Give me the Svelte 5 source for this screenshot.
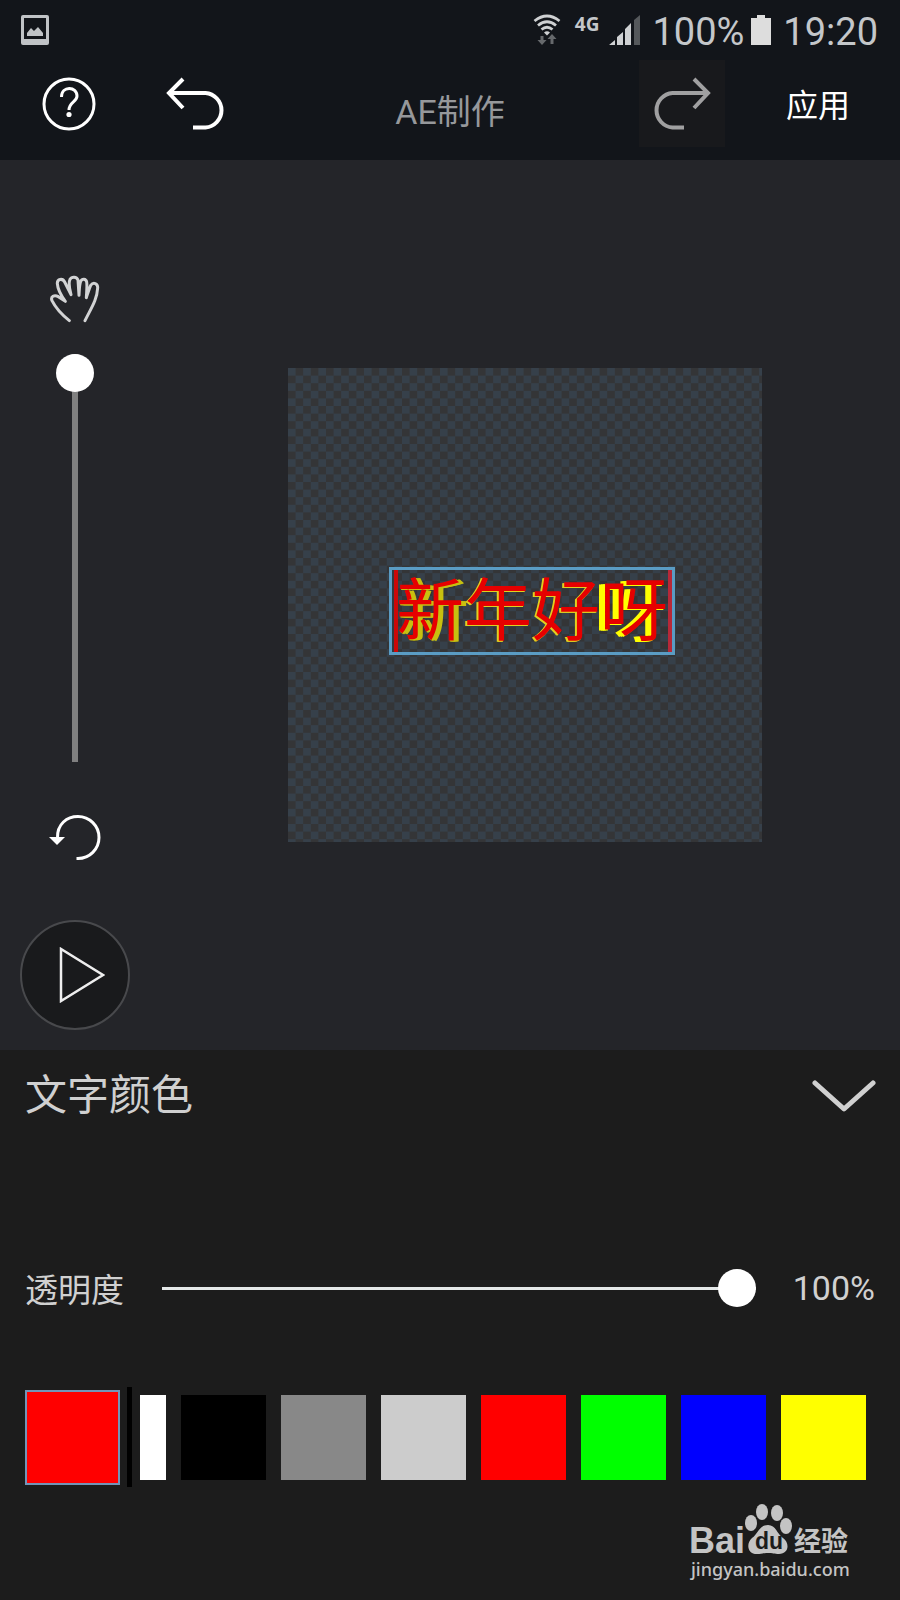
<script lang="ts">
    let zoom = 100;
    let opacity = 100;
    let current = "#ff0000";

    const colors = [
        { name: "白色", value: "#ffffff" },
        { name: "黑色", value: "#000000" },
        { name: "灰色", value: "#888888" },
        { name: "浅灰", value: "#cccccc" },
        { name: "红色", value: "#ff0000" },
        { name: "绿色", value: "#00ff00" },
        { name: "蓝色", value: "#0000ff" },
        { name: "黄色", value: "#ffff00" },
    ];
</script>

<div class="app">
    <div class="status">
        <svg class="status-photo" width="28" height="30" viewBox="0 0 28 30">
            <path fill="#c0c3c6" fill-rule="evenodd" d="M2 0H26Q28 0 28 2V28Q28 30 26 30H2Q0 30 0 28V2Q0 0 2 0ZM3 3V24H25V3Z" />
            <path fill="#c0c3c6" d="M6 21V18L10 13L13 16L17 12L22 18V21Z" />
        </svg>
        <svg class="status-wifi" width="28" height="32" viewBox="0 0 28 32">
            <g fill="none" stroke="#cfd1d3" stroke-width="2.8">
                <path d="M1.500 7Q14-3 26.500 7" />
                <path d="M5 11.500Q14 4 23 11.500" />
                <path d="M8.500 15.500Q14 11 19.500 15.500" />
            </g>
            <path fill="#cfd1d3" d="M11 18.500Q14 16 17 18.500L14 21.500Z" />
            <path fill="#66696c" d="M7.500 22H10.500V26H13.500L9 31L4.500 26H7.500ZM17.500 30H20.500V25H23.500L19 20L14.500 25H17.500Z" />
        </svg>
        <span class="network">4G</span>
        <svg class="status-signal" width="31" height="30" viewBox="0 0 31 30">
            <path fill="#cfd1d3" d="M0 30L6 25V30ZM8 22L14 17V30H8ZM16 14L22 8V30H16Z" />
            <path fill="#55585b" d="M25 5L31 0V30H25Z" />
        </svg>
        <span class="status-text">100%</span>
        <svg class="status-battery" width="20" height="30" viewBox="0 0 20 30">
            <path fill="#dddddd" d="M6 0H14V3H20V30H0V3H6Z" />
        </svg>
        <span class="status-text">19:20</span>
    </div>

    <header class="toolbar">
        <div class="toolbar-side">
            <button class="icon-button" aria-label="帮助">
                <svg width="54" height="54" viewBox="0 0 54 54" fill="none" stroke="#ffffff" stroke-width="3">
                    <circle cx="27" cy="27" r="25" />
                    <path d="M19.500 20C19.500 8.500 35 9 35 19C35 25 27 25 27 33" />
                    <circle cx="27" cy="37.500" r="2.600" fill="#ffffff" stroke="none" />
                </svg>
            </button>
            <button class="icon-button" aria-label="撤销">
                <svg width="59" height="54" viewBox="0 0 59 54" fill="none" stroke="#ffffff" stroke-width="4">
                    <path d="M17 2L3 16L17 31M3 16H39.500A17.300 17.300 0 0 1 39.500 50.500H27" />
                </svg>
            </button>
        </div>
        <h1>AE制作</h1>
        <div class="toolbar-side toolbar-right">
            <button class="icon-button redo" aria-label="重做">
                <svg width="58" height="54" viewBox="0 0 58 54" fill="none" stroke="#a0a0a1" stroke-width="4">
                    <path d="M41 2L55 16L41 31M55 16H19.500A17.300 17.300 0 0 0 19.500 50.500H31" />
                </svg>
            </button>
            <button class="apply">应用</button>
        </div>
    </header>

    <main class="stage">
        <div class="tools">
            <button class="icon-button" aria-label="移动">
                <svg width="52" height="48" viewBox="149 75 156 144" fill="none" stroke="#d2d3d4" stroke-width="9" stroke-linecap="round" stroke-linejoin="round">
                    <path d="M210 212C190 196 168 172 158 152C153 140 165 133 177 140L198 154C184 135 175 116 174 101C173 86 190 84 196 96L215 134C210 115 207 98 212 88C217 79 232 79 236 90L239 136C240 120 240 105 244 94C248 85 260 85 262 96C264 108 262 125 261 143C266 128 270 115 274 106C282 95 296 100 295 114C293 150 275 175 257 212" />
                </svg>
            </button>
            <input class="range zoom" type="range" aria-label="缩放" bind:value={zoom} />
            <button class="icon-button" aria-label="重置">
                <svg width="52" height="48" viewBox="0 0 52 48">
                    <path fill="none" stroke="#ffffff" stroke-width="3" d="M8.500 25C8 11 18 3.500 29 3.500A21 21 0 0 1 29 45.500H27.500" />
                    <path fill="#ffffff" d="M0 24H16L8 32Z" />
                </svg>
            </button>
            <button class="play" aria-label="播放">
                <svg width="46" height="56" viewBox="0 0 46 56" fill="none" stroke="#eeeeee" stroke-width="2.5">
                    <path d="M2 2V54L44 28Z" />
                </svg>
            </button>
        </div>

        <div class="canvas-area">
            <div class="canvas">
                <svg class="checker" viewBox="0 0 474 474" aria-hidden="true">
                    <defs>
                        <pattern id="checker" width="15.200" height="15.200" patternUnits="userSpaceOnUse">
                            <rect width="15.200" height="15.200" fill="#36404a" />
                            <path fill="#343537" d="M7.600 0H15.200V7.600H7.600ZM0 7.600H7.600V15.200H0Z" />
                        </pattern>
                    </defs>
                    <rect width="474" height="474" fill="url(#checker)" />
                </svg>
                <div class="text-layer">
                    <span class="far-right">新</span><span class="near-left">年</span><span class="near-left">好</span><span class="far-left">呀</span>
                </div>
            </div>
        </div>
    </main>

    <section class="panel">
        <div class="panel-title">
            <h2>文字颜色</h2>
            <button class="icon-button" aria-label="收起">
                <svg width="64" height="34" viewBox="0 0 64 34" fill="none" stroke="#d0d0d0" stroke-width="5" stroke-linecap="round" stroke-linejoin="round">
                    <path d="M3 4L32 30L61 4" />
                </svg>
            </button>
        </div>

        <div class="opacity-row">
            <label for="opacity">透明度</label>
            <input id="opacity" class="range opacity" type="range" bind:value={opacity} />
            <output for="opacity">{opacity}%</output>
        </div>

        <div class="color-row">
            <button class="current" aria-label="当前颜色" style="background-color: {current}"></button>
            <div class="divider"></div>
            <div class="swatches">
                {#each colors as color}
                    <button
                        class="swatch"
                        aria-label={color.name}
                        style="background-color: {color.value}"
                        on:click={() => current = color.value}
                    ></button>
                {/each}
            </div>
        </div>

        <a class="source" href="https://jingyan.baidu.com">
            <svg width="160" height="52" viewBox="0 0 160 52" fill="#c4c4c4">
                <text class="logo-latin" x="-2" y="49">Bai</text>
                <ellipse cx="60" cy="19" rx="6" ry="8" />
                <ellipse cx="71" cy="8" rx="6" ry="8" />
                <ellipse cx="86" cy="9" rx="6" ry="8" />
                <ellipse cx="95" cy="22" rx="6" ry="8" />
                <path d="M77 21C68 21 67 30 61 34C55 39 56 50 66 50C71 50 72 49 77 49C82 49 83 50 88 50C98 50 99 39 92 34C86 30 85 21 77 21Z" />
                <text class="logo-du" x="64" y="45">du</text>
                <text class="logo-cjk" x="103" y="47">经验</text>
            </svg>
            <span>jingyan.baidu.com</span>
        </a>
    </section>
</div>

<style>
:global(body) {
    background: #1c1c1c;
}

.app {
    display: flex;
    flex-direction: column;
    min-height: 100vh;
    font-family: Roboto, "Noto Sans CJK SC", sans-serif;
    color: #d0d0d0;
}

button {
    padding: 0;
    border: none;
    background: none;
    color: inherit;
    font-family: inherit;
    cursor: pointer;
}

svg {
    display: block;
}

h1,
h2 {
    margin: 0;
    font-weight: 400;
}

.icon-button {
    display: flex;
    align-items: center;
    justify-content: center;
}

.status {
    display: flex;
    align-items: center;
    height: 60px;
    padding: 0 22px 0 21px;
    background: #12151a;
    color: #c4c7ca;
}

.status-photo {
    margin-right: auto;
}

.network {
    margin: 0 10px 12px 14px;
    font: 700 19px/24px "Noto Sans", sans-serif;
}

.status-text {
    margin-left: 12px;
    padding-top: 4px;
    font-size: 38px;
    line-height: 56px;
}

.status-battery {
    margin-left: 7px;
}

.toolbar {
    display: grid;
    grid-template-columns: 1fr auto 1fr;
    height: 100px;
    background: #12151a;
}

.toolbar-side {
    display: flex;
    align-items: flex-start;
    gap: 70px;
    padding: 17px 0 0 42px;
}

.toolbar-right {
    justify-content: flex-end;
    gap: 61px;
    padding: 0 50px 0 0;
}

h1 {
    color: #96989b;
    font-size: 34px;
    line-height: 104px;
}

.redo {
    width: 86px;
    height: 87px;
    background: #18191c;
}

.apply {
    color: #ffffff;
    font-size: 32px;
    line-height: 92px;
}

.stage {
    flex: 1;
    display: grid;
    grid-template-columns: 150px 1fr;
    background: #242529;
}

.tools {
    display: flex;
    flex-direction: column;
    align-items: center;
    padding: 115px 0 20px;
}

.range {
    appearance: none;
}

.range::-webkit-slider-thumb {
    appearance: none;
    width: 38px;
    height: 38px;
    border-radius: 50%;
    background: #ffffff;
}

.zoom {
    writing-mode: vertical-lr;
    direction: rtl;
    width: 38px;
    height: 408px;
    margin: 31px 0 51px;
    background: linear-gradient(#808080, #808080) center / 6px 100% no-repeat;
}

.play {
    display: flex;
    align-items: center;
    justify-content: center;
    box-sizing: border-box;
    width: 110px;
    height: 110px;
    margin-top: 59px;
    padding-left: 14px;
    border: 2px solid #48494c;
    border-radius: 50%;
    background: #191a1c;
}

.canvas-area {
    display: flex;
    align-items: center;
    justify-content: center;
}

.canvas {
    display: grid;
    place-items: center;
    width: 474px;
}

.checker {
    grid-area: 1 / 1;
    width: 100%;
}

.text-layer {
    z-index: 1;
    grid-area: 1 / 1;
    box-sizing: border-box;
    margin: 12px 0 0 14px;
    padding: 2px 4px 0;
    border: 3px solid #5a9cc4;
    box-shadow: inset 2px 0 #333a40, inset 6px 0 #cc0808, inset -4px 0 #b82838;
    color: #e60000;
    font-size: 68px;
    line-height: 80px;
    white-space: nowrap;
}

.far-right {
    text-shadow: 1px 1px #c8c010, 2px 1px #c8c010, 4px 1px #c8c010, 5px 1px #c8c010;
}

.near-left {
    text-shadow: -1px 1px #e0d020, -2px 1px #e0d020;
}

.far-left {
    text-shadow: -2px 1px #ffff00, -4px 1px #ffff00, -6px 1px #ffff00;
}

.panel {
    display: flex;
    flex-direction: column;
    padding-bottom: 18px;
    background: #1c1c1c;
}

.panel-title {
    display: flex;
    align-items: center;
    justify-content: space-between;
    padding: 2px 24px 0 25px;
}

h2 {
    font-size: 42px;
    line-height: 88px;
}

.opacity-row {
    display: flex;
    align-items: center;
    height: 60px;
    margin-top: 118px;
    padding: 0 25px;
    font-size: 33px;
}

.opacity {
    flex: 1;
    min-width: 0;
    height: 38px;
    margin: 0 37px 0 38px;
    background: linear-gradient(#e4e8e8, #e4e8e8) center / 100% 3px no-repeat;
}

output {
    font-size: 34px;
}

.color-row {
    display: flex;
    align-items: center;
    height: 100px;
    margin-top: 69px;
    padding: 0 34px 0 25px;
}

.current {
    flex: none;
    box-sizing: border-box;
    width: 95px;
    height: 95px;
    border: 2px solid #7394b8;
}

.divider {
    flex: none;
    width: 5px;
    height: 100px;
    margin: 0 8px 0 7px;
    background: #000000;
}

.swatches {
    flex: 1;
    display: flex;
    justify-content: flex-end;
    gap: 15px;
    min-width: 0;
    overflow: hidden;
}

.swatch {
    flex: none;
    width: 85px;
    height: 85px;
}

.source {
    align-self: flex-end;
    margin: 17px 49px 0 0;
    color: #c4c4c4;
    font: 500 18px/26px "Noto Sans", sans-serif;
    text-decoration: none;
}

.source svg {
    overflow: visible;
}

.logo-latin {
    font: 700 36px "Liberation Sans", sans-serif;
}

.logo-du {
    fill: #1c1c1c;
    font: 700 23px "Liberation Sans", sans-serif;
}

.logo-cjk {
    font: 700 27px "Noto Sans CJK SC", sans-serif;
}
</style>
